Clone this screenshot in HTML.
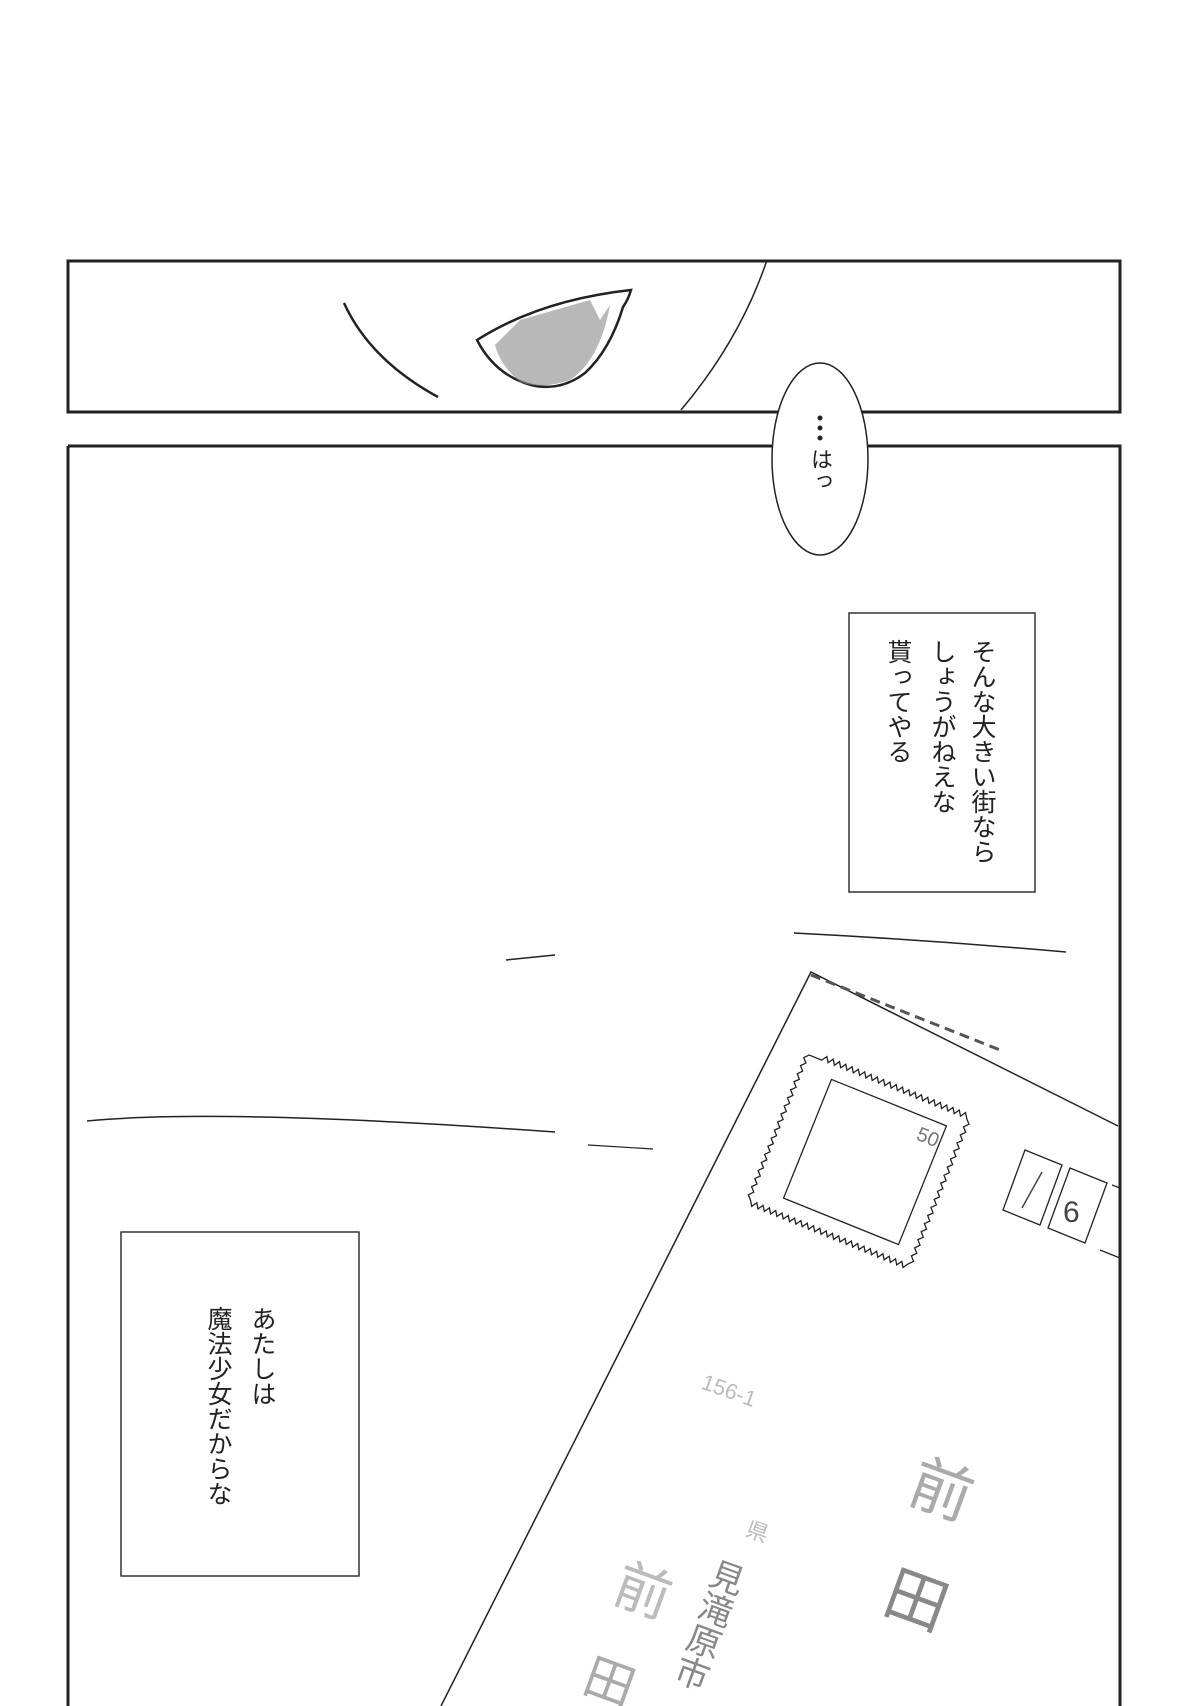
<!DOCTYPE html>
<html><head><meta charset="utf-8"><style>
html,body{margin:0;padding:0;background:#fff;}
body{width:1200px;height:1706px;position:relative;overflow:hidden;font-family:"Liberation Sans","Noto Sans CJK JP",sans-serif;}
.v{position:absolute;writing-mode:vertical-rl;color:#222;line-height:1;}
</style></head><body>
<svg width="1200" height="1706" style="position:absolute;left:0;top:0" xmlns="http://www.w3.org/2000/svg">
<g fill="none" stroke="#222">
<rect x="68" y="261" width="1052" height="151" stroke-width="3"/>
<path d="M68 446 H1120 V1706 M68 446 V1706" stroke-width="3"/>
<!-- eye -->
<path d="M344 303 Q370 360 438 397" stroke-width="2.5"/>
<path d="M477 340 Q540 300 631 290 Q628 300 623 307 Q610 350 585 373 Q560 392 531 385 Q495 375 477 340 Z" stroke-width="2.5"/>
<path d="M495 345 L520 320 L590 300 L600 320 L610 305 Q600 360 570 380 Q540 390 520 382 Q500 365 495 345 Z" fill="#888" stroke="none" opacity="0.6"/>
<path d="M767 260 Q740 340 681 410" stroke-width="1.5"/>
<!-- background lines -->
<path d="M794 933 Q930 940 1066 952" stroke-width="1.5"/>
<path d="M506 960 L555 955" stroke-width="1.5"/>
<path d="M87 1121 Q220 1108 555 1132" stroke-width="1.5"/>
<path d="M588 1145 L653 1149" stroke-width="1.2"/>
<!-- envelope -->
<path d="M441 1706 L811 972 L1118 1126" stroke-width="1.5"/>
<path d="M811 975 L1000 1050" stroke="#555" stroke-width="3" stroke-dasharray="10 6"/>
<!-- stamp -->
<g transform="translate(865 1162) rotate(22)" stroke-width="1.3">
<g transform="translate(-25.2 -10.4) scale(0.68 0.87)">
<path vector-effect="non-scaling-stroke" d="M-78 -78 l5 -6 l5 6 l5 -6 l5 6 l5 -6 l5 6 l5 -6 l5 6 l5 -6 l5 6 l5 -6 l5 6 l5 -6 l5 6 l5 -6 l5 6 l5 -6 l5 6 l5 -6 l5 6 l5 -6 l5 6 l5 -6 l5 6 l5 -6 l5 6 l5 -6 l5 6 l5 -6 l5 6 l5 -6 l5 6 l5 -6 l5 6 l5 -6 l5 6 l5 -6 l5 6 l5 -6 l5 6 l5 -6 l5 6 l5 -6 l5 6 l5 -6 l5 6
 l6 5 l-6 5 l6 5 l-6 5 l6 5 l-6 5 l6 5 l-6 5 l6 5 l-6 5 l6 5 l-6 5 l6 5 l-6 5 l6 5 l-6 5 l6 5 l-6 5 l6 5 l-6 5 l6 5 l-6 5 l6 5 l-6 5 l6 5 l-6 5 l6 5 l-6 5 l6 5 l-6 5 l6 5 l-6 5 l6 5 l-6 5 l6 5 l-6 5
 l-5 6 l-5 -6 l-5 6 l-5 -6 l-5 6 l-5 -6 l-5 6 l-5 -6 l-5 6 l-5 -6 l-5 6 l-5 -6 l-5 6 l-5 -6 l-5 6 l-5 -6 l-5 6 l-5 -6 l-5 6 l-5 -6 l-5 6 l-5 -6 l-5 6 l-5 -6 l-5 6 l-5 -6 l-5 6 l-5 -6 l-5 6 l-5 -6 l-5 6 l-5 -6 l-5 6 l-5 -6 l-5 6 l-5 -6 l-5 6 l-5 -6 l-5 6 l-5 -6 l-5 6 l-5 -6 l-5 6 l-5 -6 l-5 6 l-5 -6 l-5 6 l-5 -6 l-5 6 l-5 -6
 l-6 -5 l6 -5 l-6 -5 l6 -5 l-6 -5 l6 -5 l-6 -5 l6 -5 l-6 -5 l6 -5 l-6 -5 l6 -5 l-6 -5 l6 -5 l-6 -5 l6 -5 l-6 -5 l6 -5 l-6 -5 l6 -5 l-6 -5 l6 -5 l-6 -5 l6 -5 l-6 -5 l6 -5 l-6 -5 l6 -5 l-6 -5 l6 -5 l-6 -5 l6 -5 l-6 -5 l6 -5 l-6 -5 l6 -5 Z"/>
</g>
<rect x="-62" y="-64" width="124" height="128"/>
<text x="38" y="-40" font-size="20" fill="#777" stroke="none" font-family="Liberation Sans">50</text>
</g>
<!-- postal boxes -->
<path d="M1025 1150 L1062 1165 L1040 1225 L1003 1210 Z M1070 1168 L1107 1183 L1085 1243 L1048 1228 Z M1112 1185 L1120 1188 M1100 1250 L1120 1258" stroke-width="1.3"/>
<path d="M1042 1172 L1022 1208" stroke="#444" stroke-width="1.5"/>
<text x="1063" y="1222" font-size="30" fill="#444" stroke="none" font-family="Liberation Sans">6</text>
</g>
<g fill="#bbb" font-family="Liberation Sans,Noto Sans CJK JP,sans-serif">
<text x="700" y="1388" font-size="22" transform="rotate(20 700 1388)">156-1</text>
<text x="905" y="1500" font-size="62" fill="#aaa" transform="rotate(20 905 1500)">前</text>
<text x="880" y="1610" font-size="62" fill="#888" transform="rotate(20 880 1610)">田</text>
<text x="760" y="1520" font-size="22" writing-mode="tb" transform="rotate(20 760 1520)">県</text>
<text x="730" y="1560" font-size="34" fill="#888" writing-mode="tb" transform="rotate(20 730 1560)">見滝原市</text>
<text x="610" y="1600" font-size="56" transform="rotate(20 610 1600)">前</text>
<text x="580" y="1690" font-size="50" fill="#aaa" transform="rotate(20 580 1690)">田</text>
</g>
<ellipse cx="820" cy="459" rx="48" ry="96" fill="#fff" stroke="#222" stroke-width="1.5"/>
<rect x="849" y="613" width="186" height="279" fill="#fff" stroke="#333" stroke-width="1.5"/>
<rect x="121" y="1232" width="238" height="344" fill="#fff" stroke="#333" stroke-width="1.5"/>
<circle cx="820" cy="418" r="2.5" fill="#222"/><circle cx="820" cy="428" r="2.5" fill="#222"/><circle cx="820" cy="438" r="2.5" fill="#222"/>
</svg>
<div class="v" style="left:809px;top:448px;font-size:22px;">はっ</div>
<div class="v" style="left:969px;top:639px;font-size:25px;">そんな大きい街なら</div>
<div class="v" style="left:929px;top:639px;font-size:25px;">しょうがねえな</div>
<div class="v" style="left:885px;top:639px;font-size:25px;">貰ってやる</div>
<div class="v" style="left:249px;top:1306px;font-size:25px;">あたしは</div>
<div class="v" style="left:205px;top:1306px;font-size:25px;">魔法少女だからな</div>
</body></html>
